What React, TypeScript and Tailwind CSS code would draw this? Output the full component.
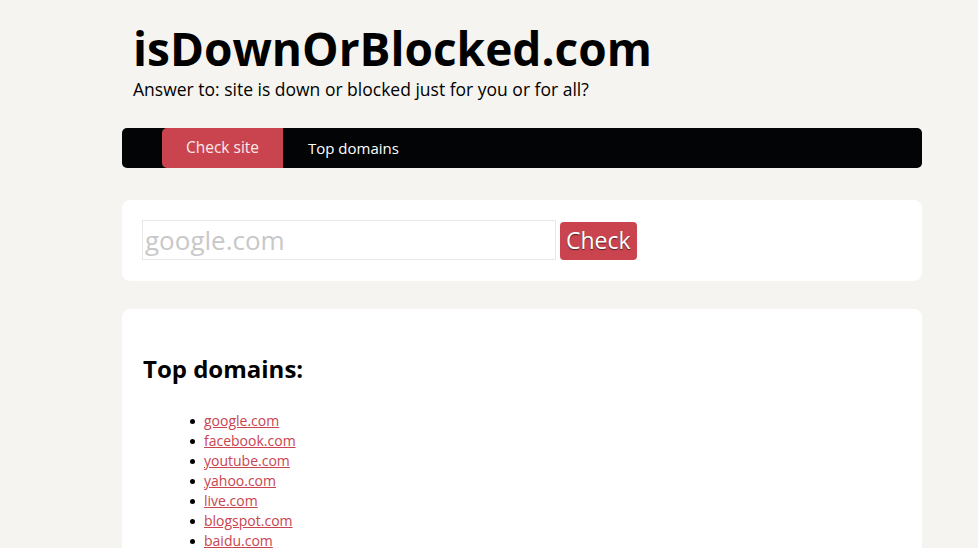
import React from "react";

const domains = [
  "google.com",
  "facebook.com",
  "youtube.com",
  "yahoo.com",
  "live.com",
  "blogspot.com",
  "baidu.com",
  "wikipedia.org",
  "twitter.com",
];

export default function App() {
  return (
    <div
      className="min-h-[548px] bg-[#f5f4f0] text-black"
      style={{ fontFamily: "'Open Sans', 'DejaVu Sans', sans-serif" }}
    >
      <div className="ml-[122px] w-[800px] pt-[24px]">
        <div className="px-[11px]">
          <h1 className="text-[46px] font-bold leading-[48px]">isDownOrBlocked.com</h1>
          <p className="text-[17.5px] leading-[22px] mt-[6px]">
            Answer to: site is down or blocked just for you or for all?
          </p>
        </div>
        <nav className="mt-[28px] h-[40px] bg-[#030406] rounded-[5px] flex pl-[40px]">
          <a className="h-full w-[121px] bg-[#c9444f] rounded-l-[5px] flex items-center justify-center text-[#fbe9ea] text-[15.5px]">
            Check site
          </a>
          <a className="h-full px-[25px] flex items-center text-white text-[15px]">Top domains</a>
        </nav>
        <div className="mt-[32px] h-[81px] bg-white rounded-[8px] flex items-center px-[20px]">
          <input
            className="h-[40px] w-[414px] -mt-[2px] border border-[#e8e8e8] text-[26px] px-[2px] outline-none placeholder:text-[#c8c8c8]"
            placeholder="google.com"
          />
          <button className="ml-[4px] h-[38px] px-[6px] bg-[#c9444f] rounded-[4px] text-white text-[23px] leading-none [text-shadow:0_1px_1px_rgba(0,0,0,0.6)]">
            Check
          </button>
        </div>
        <div className="mt-[28px] bg-white rounded-[8px] px-[21px] pt-[44px] pb-[20px]">
          <h2 className="text-[24px] font-bold leading-[32px]">Top domains:</h2>
          <ul className="mt-[26px] pl-[47px] text-[14px] leading-[20px]">
            {domains.map((d) => (
              <li key={d} className="flex items-center">
                <span className="w-[5px] h-[5px] rounded-full bg-black mr-[9px] mt-[1px]" />
                <a className="text-[#c9444f] underline">{d}</a>
              </li>
            ))}
          </ul>
        </div>
      </div>
    </div>
  );
}
